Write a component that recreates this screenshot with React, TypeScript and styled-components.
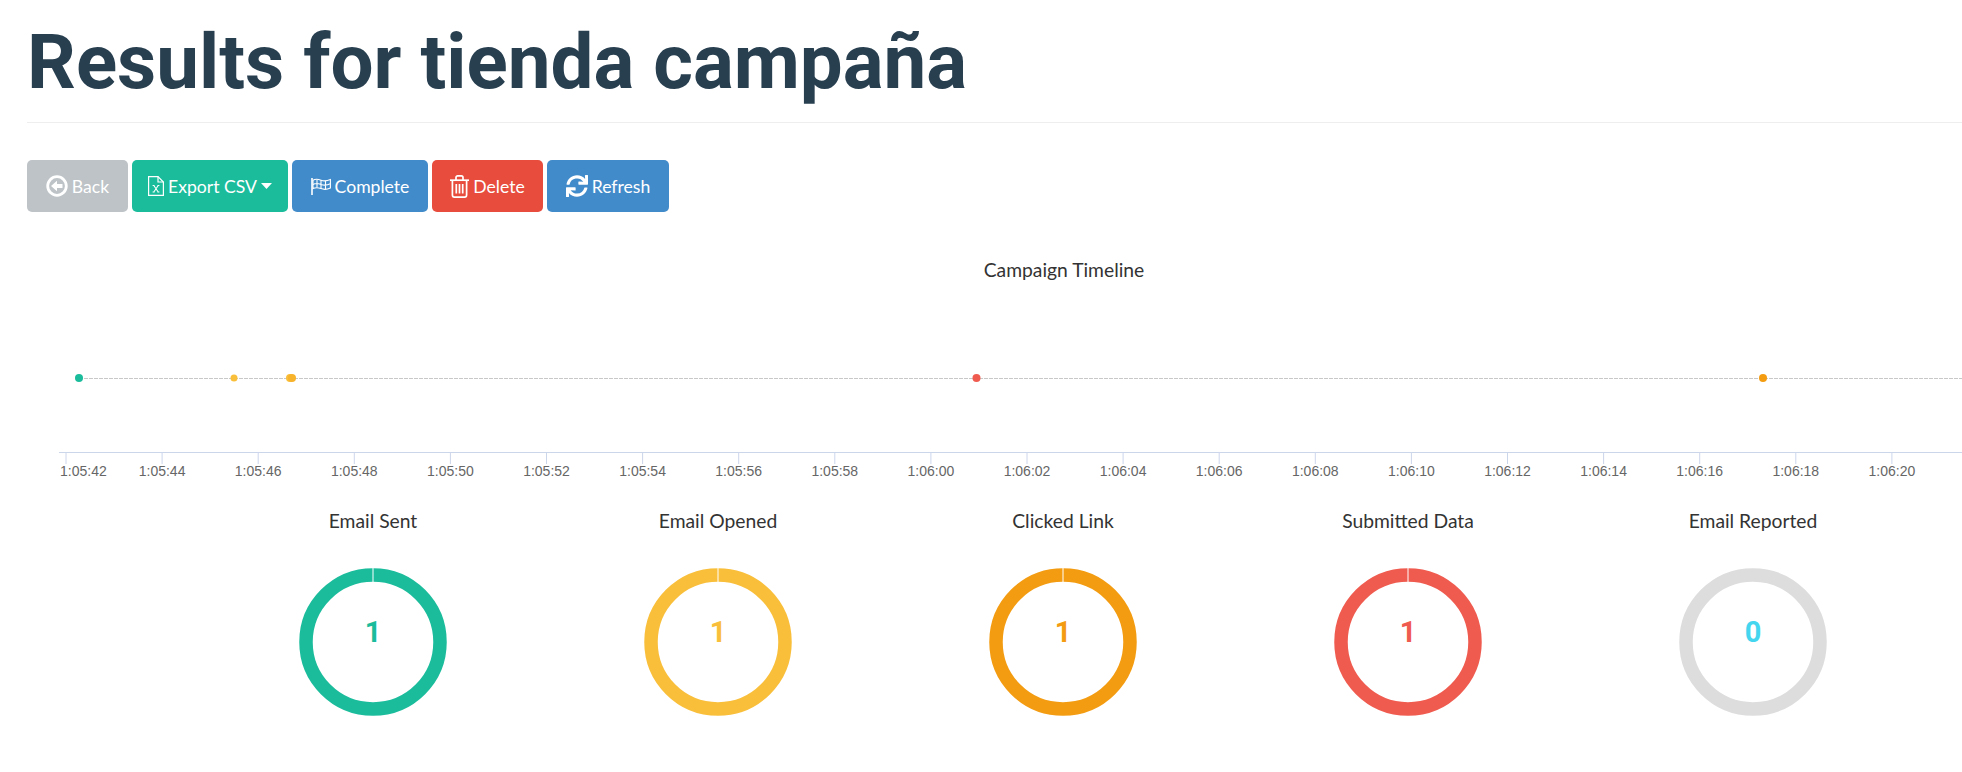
import React from 'react';
import styled, { createGlobalStyle } from 'styled-components';
import { FaSync } from 'react-icons/fa';

const GlobalStyle = createGlobalStyle`
  html, body {
    margin: 0;
    padding: 0;
    background: #fff;
    overflow: hidden;
  }
  body {
    font-family: Lato, "Noto Sans", sans-serif;
  }
`;

const Page = styled.div`
  width: 1962px;
  height: 772px;
  overflow: hidden;
  padding-left: 27px;
  box-sizing: border-box;
`;

const Title = styled.h1`
  margin: 0;
  padding: 0 0 15px;
  height: 123px;
  box-sizing: border-box;
  display: flex;
  align-items: flex-end;
  font-family: Roboto, sans-serif;
  font-weight: 700;
  font-size: 76.3px;
  line-height: 90px;
  color: #283f50;
  border-bottom: 1px solid #eee;
`;

const Toolbar = styled.div`
  display: flex;
  gap: 4px;
  margin-top: 37px;
`;

const Button = styled.button<{ $bg: string; $w: number }>`
  display: flex;
  align-items: center;
  justify-content: center;
  gap: 4px;
  width: ${p => p.$w}px;
  height: 52px;
  padding: 0;
  border: 0;
  border-radius: 5px;
  background: ${p => p.$bg};
  color: #fff;
  font-family: Lato, "Noto Sans", sans-serif;
  font-size: 17.6px;
`;

const ChartBox = styled.div`
  height: 297px;
`;

const ChartSvg = styled.svg`
  display: block;
  margin-left: -27px;
`;

const Stats = styled.div`
  display: grid;
  grid-template-columns: repeat(5, 345px);
  margin-left: 173.5px;
`;

const Stat = styled.div`
  display: flex;
  flex-direction: column;
  align-items: center;
`;

const StatTitle = styled.div`
  font-size: 19.3px;
  line-height: 24px;
  color: #333;
`;

const Donut = styled.div`
  position: relative;
  width: 148px;
  height: 148px;
  margin-top: 35px;
`;

const DonutValue = styled.div<{ $color: string }>`
  position: absolute;
  left: 0;
  right: 0;
  top: 48px;
  text-align: center;
  font-family: Roboto, sans-serif;
  font-weight: 700;
  font-size: 29px;
  line-height: 32px;
  color: ${p => p.$color};
`;

const ticks = [
  '1:05:42', '1:05:44', '1:05:46', '1:05:48', '1:05:50', '1:05:52', '1:05:54', '1:05:56', '1:05:58',
  '1:06:00', '1:06:02', '1:06:04', '1:06:06', '1:06:08', '1:06:10', '1:06:12', '1:06:14', '1:06:16',
  '1:06:18', '1:06:20',
];

const events = [
  { x: 79, color: '#1abc9c', r: 4 },
  { x: 234, color: '#f9bf3b', r: 3.5 },
  { x: 290, color: '#f9bf3b', r: 4 },
  { x: 292, color: '#f7b32b', r: 4 },
  { x: 976.5, color: '#f05b4f', r: 4 },
  { x: 1763, color: '#f39c12', r: 4 },
];

const stats = [
  { title: 'Email Sent', value: 1, color: '#1abc9c', ring: '#1abc9c' },
  { title: 'Email Opened', value: 1, color: '#f9bf3b', ring: '#f9bf3b' },
  { title: 'Clicked Link', value: 1, color: '#f39c12', ring: '#f39c12' },
  { title: 'Submitted Data', value: 1, color: '#f05b4f', ring: '#f05b4f' },
  { title: 'Email Reported', value: 0, color: '#45d6ef', ring: '#dddddd' },
];

const BackIcon = () => (
  <svg width={22} height={22} viewBox="0 0 22 22">
    <circle cx={11} cy={11} r={9.3} fill="none" stroke="#fff" strokeWidth={2.8} />
    <path d="M5 11 L11 5.8 V9 H16.5 V13 H11 V16.2 Z" fill="#fff" />
  </svg>
);

const FileIcon = () => (
  <svg width={16} height={20} viewBox="0 0 16 20" fill="none" stroke="#fff" strokeWidth={1.2}>
    <path d="M0.6 0.6 H10 L15.4 6 V19.4 H0.6 Z" />
    <path d="M10 0.6 V6 H15.4" />
    <path d="M4.6 9.5 H6.6 M9.4 9.5 H11.4 M4.6 16 H6.6 M9.4 16 H11.4 M5.8 9.5 L10.2 16 M10.2 9.5 L5.8 16" strokeWidth={1.1} />
  </svg>
);

const CaretIcon = () => (
  <svg width={11} height={6} viewBox="0 0 11 6">
    <path d="M0 0 H11 L5.5 6 Z" fill="#fff" />
  </svg>
);

const FlagIcon = () => (
  <svg width={20} height={17} viewBox="0 0 20 17" fill="none" stroke="#fff" strokeWidth={1.1}>
    <path d="M1 0 V17" strokeWidth={1.6} />
    <path d="M2 2.2 C5 0.4 7.5 1.2 10 2.2 C13 3.4 16 3 19.4 1.6 V10 C16 11.6 13 11.8 10 10.6 C7.5 9.6 5 9 2 10.6 Z" />
    <path d="M2 6.4 C5 4.8 7.5 5.4 10 6.4 C13 7.6 16 7.4 19.4 5.8 M6 1.4 V9.4 M10 2.2 V10.6 M14.5 3 V11.2" />
  </svg>
);

const TrashIcon = () => (
  <svg width={19} height={23} viewBox="0 0 19 23" fill="none" stroke="#fff" strokeWidth={1.7}>
    <path d="M0 5.2 H19" />
    <path d="M6 5 V2.6 C6 1.5 6.8 0.9 7.6 0.9 H11.4 C12.2 0.9 13 1.5 13 2.6 V5" />
    <path d="M2.4 5.2 V20 C2.4 21.3 3.2 22.1 4.4 22.1 H14.6 C15.8 22.1 16.6 21.3 16.6 20 V5.2" />
    <path d="M6.3 9 V18.5 M9.5 9 V18.5 M12.7 9 V18.5" />
  </svg>
);

const Timeline = () => (
  <ChartSvg width={1962} height={297} viewBox="0 212 1962 297">
    <text x={1064} y={277} textAnchor="middle" fontFamily="Lato, sans-serif" fontSize={19.3} fill="#333">
      Campaign Timeline
    </text>
    <line x1={79} x2={1962} y1={378.5} y2={378.5} stroke="#c8c8c8" strokeDasharray="4 1" />
    <line x1={59} x2={1962} y1={452.5} y2={452.5} stroke="#ccd6eb" />
    {ticks.map((t, i) => {
      const x = 66 + i * 96.1;
      return (
        <g key={t}>
          <line x1={x} x2={x} y1={452} y2={464} stroke="#ccd6eb" />
          <text
            x={i === 0 ? 60 : x}
            y={476}
            textAnchor={i === 0 ? 'start' : 'middle'}
            fontFamily="Liberation Sans, sans-serif"
            fontSize={14}
            fill="#666"
          >
            {t}
          </text>
        </g>
      );
    })}
    {events.map(e => (
      <circle key={e.x} cx={e.x} cy={378} r={e.r} fill={e.color} />
    ))}
  </ChartSvg>
);

const Ring = ({ color, split }: { color: string; split: boolean }) => (
  <svg width={148} height={148} viewBox="0 0 148 148">
    <circle cx={74} cy={74} r={67} fill="none" stroke={color} strokeWidth={13.5} />
    {split ? <line x1={74} x2={74} y1={0} y2={14} stroke="#fff" strokeWidth={1} /> : null}
  </svg>
);

const App = () => (
  <Page>
    <GlobalStyle />
    <Title>Results for tienda campaña</Title>
    <Toolbar>
      <Button $bg="#bdc3c7" $w={101}>
        <BackIcon />
        Back
      </Button>
      <Button $bg="#1abc9c" $w={156}>
        <FileIcon />
        Export CSV
        <CaretIcon />
      </Button>
      <Button $bg="#428bca" $w={136}>
        <FlagIcon />
        Complete
      </Button>
      <Button $bg="#e74c3c" $w={111}>
        <TrashIcon />
        Delete
      </Button>
      <Button $bg="#428bca" $w={122}>
        <FaSync size={22} />
        Refresh
      </Button>
    </Toolbar>
    <ChartBox>
      <Timeline />
    </ChartBox>
    <Stats>
      {stats.map(s => (
        <Stat key={s.title}>
          <StatTitle>{s.title}</StatTitle>
          <Donut>
            <Ring color={s.ring} split={s.value > 0} />
            <DonutValue $color={s.color}>{s.value}</DonutValue>
          </Donut>
        </Stat>
      ))}
    </Stats>
  </Page>
);

export default App;
